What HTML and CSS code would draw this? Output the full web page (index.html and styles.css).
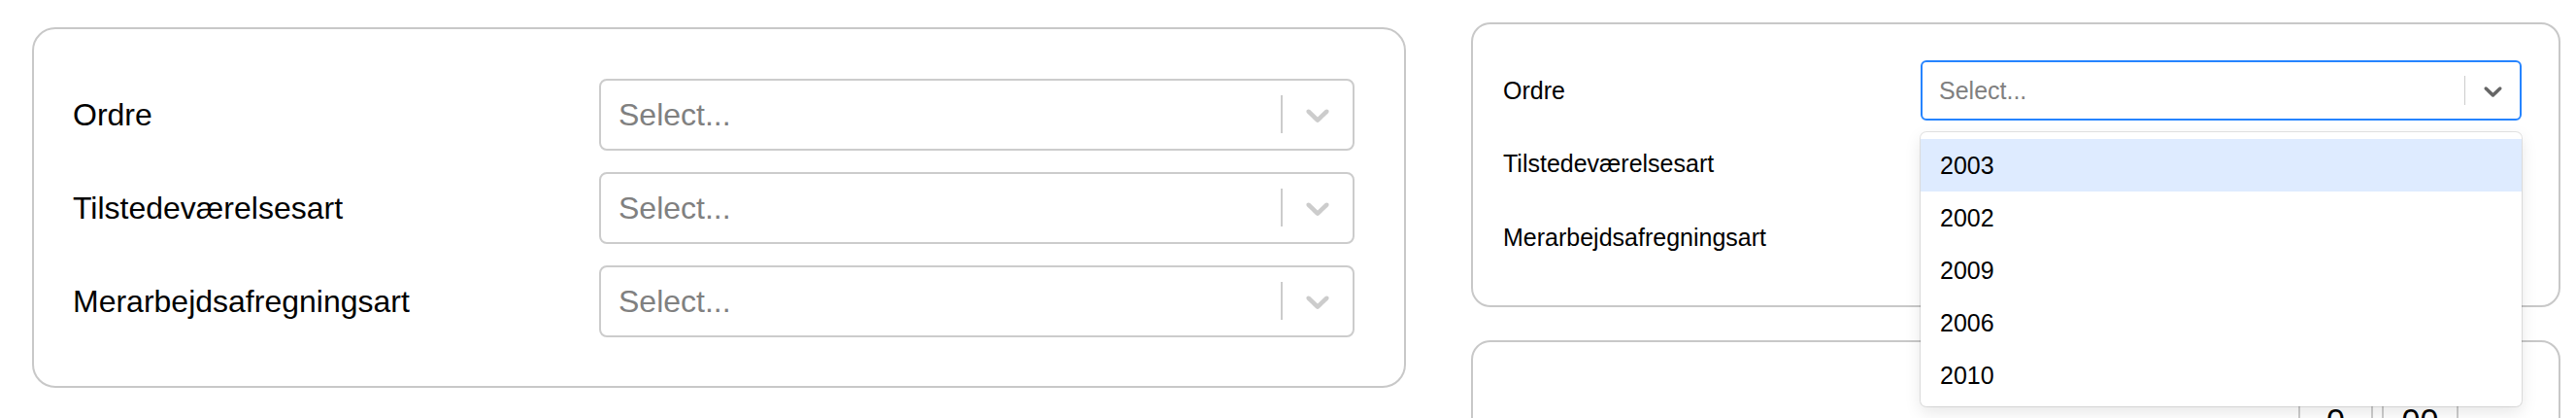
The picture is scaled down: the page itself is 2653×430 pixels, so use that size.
FILE: index.html
```html
<!DOCTYPE html>
<html lang="da">
<head>
    <meta charset="UTF-8">
    <title>Ordre</title>
    <link rel="stylesheet" href="styles.css">
</head>
<body>

    <div class="page">

        <!-- Large form card -->
        <section class="card card-big">
            <div class="fields">
                <label class="field-label">Ordre</label>
                <div class="select">
                    <div class="select-value">Select...</div>
                    <span class="select-sep"></span>
                    <div class="select-arrow">
                        <svg viewBox="0 0 20 20"><path d="M4.516 7.548c0.436-0.446 1.043-0.481 1.576 0l3.908 3.747 3.908-3.747c0.533-0.481 1.141-0.446 1.574 0 0.436 0.445 0.408 1.197 0 1.615-0.406 0.418-4.695 4.502-4.695 4.502-0.217 0.223-0.502 0.335-0.787 0.335s-0.57-0.112-0.789-0.335c0 0-4.287-4.084-4.695-4.502s-0.436-1.17 0-1.615z"/></svg>
                    </div>
                </div>

                <label class="field-label">Tilstedeværelsesart</label>
                <div class="select">
                    <div class="select-value">Select...</div>
                    <span class="select-sep"></span>
                    <div class="select-arrow">
                        <svg viewBox="0 0 20 20"><path d="M4.516 7.548c0.436-0.446 1.043-0.481 1.576 0l3.908 3.747 3.908-3.747c0.533-0.481 1.141-0.446 1.574 0 0.436 0.445 0.408 1.197 0 1.615-0.406 0.418-4.695 4.502-4.695 4.502-0.217 0.223-0.502 0.335-0.787 0.335s-0.57-0.112-0.789-0.335c0 0-4.287-4.084-4.695-4.502s-0.436-1.17 0-1.615z"/></svg>
                    </div>
                </div>

                <label class="field-label">Merarbejdsafregningsart</label>
                <div class="select">
                    <div class="select-value">Select...</div>
                    <span class="select-sep"></span>
                    <div class="select-arrow">
                        <svg viewBox="0 0 20 20"><path d="M4.516 7.548c0.436-0.446 1.043-0.481 1.576 0l3.908 3.747 3.908-3.747c0.533-0.481 1.141-0.446 1.574 0 0.436 0.445 0.408 1.197 0 1.615-0.406 0.418-4.695 4.502-4.695 4.502-0.217 0.223-0.502 0.335-0.787 0.335s-0.57-0.112-0.789-0.335c0 0-4.287-4.084-4.695-4.502s-0.436-1.17 0-1.615z"/></svg>
                    </div>
                </div>
            </div>
        </section>

        <!-- Side column -->
        <div class="side">
            <section class="card card-small">
                <div class="fields">
                    <label class="field-label">Ordre</label>
                    <div class="select is-open">
                        <div class="select-value">Select...</div>
                        <span class="select-sep"></span>
                        <div class="select-arrow">
                            <svg viewBox="0 0 20 20"><path d="M4.516 7.548c0.436-0.446 1.043-0.481 1.576 0l3.908 3.747 3.908-3.747c0.533-0.481 1.141-0.446 1.574 0 0.436 0.445 0.408 1.197 0 1.615-0.406 0.418-4.695 4.502-4.695 4.502-0.217 0.223-0.502 0.335-0.787 0.335s-0.57-0.112-0.789-0.335c0 0-4.287-4.084-4.695-4.502s-0.436-1.17 0-1.615z"/></svg>
                        </div>

                        <!-- Open dropdown -->
                        <ul class="menu">
                            <li class="menu-option is-focused">2003</li>
                            <li class="menu-option">2002</li>
                            <li class="menu-option">2009</li>
                            <li class="menu-option">2006</li>
                            <li class="menu-option">2010</li>
                        </ul>
                    </div>

                    <label class="field-label">Tilstedeværelsesart</label>
                    <div class="select">
                        <div class="select-value">Select...</div>
                        <span class="select-sep"></span>
                        <div class="select-arrow">
                            <svg viewBox="0 0 20 20"><path d="M4.516 7.548c0.436-0.446 1.043-0.481 1.576 0l3.908 3.747 3.908-3.747c0.533-0.481 1.141-0.446 1.574 0 0.436 0.445 0.408 1.197 0 1.615-0.406 0.418-4.695 4.502-4.695 4.502-0.217 0.223-0.502 0.335-0.787 0.335s-0.57-0.112-0.789-0.335c0 0-4.287-4.084-4.695-4.502s-0.436-1.17 0-1.615z"/></svg>
                        </div>
                    </div>

                    <label class="field-label">Merarbejdsafregningsart</label>
                    <div class="select">
                        <div class="select-value">Select...</div>
                        <span class="select-sep"></span>
                        <div class="select-arrow">
                            <svg viewBox="0 0 20 20"><path d="M4.516 7.548c0.436-0.446 1.043-0.481 1.576 0l3.908 3.747 3.908-3.747c0.533-0.481 1.141-0.446 1.574 0 0.436 0.445 0.408 1.197 0 1.615-0.406 0.418-4.695 4.502-4.695 4.502-0.217 0.223-0.502 0.335-0.787 0.335s-0.57-0.112-0.789-0.335c0 0-4.287-4.084-4.695-4.502s-0.436-1.17 0-1.615z"/></svg>
                        </div>
                    </div>
                </div>
            </section>

            <section class="card card-time">
                <div class="time">
                    <div class="time-box time-hours">0</div>
                    <div class="time-box time-minutes">00</div>
                </div>
            </section>
        </div>

    </div>

</body>
</html>
```

FILE: styles.css
```css
/* Reset */
* {
    margin: 0;
    padding: 0;
    box-sizing: border-box;
}

html, body {
    height: 430px;
    overflow: hidden;
}

body {
    font-family: "Liberation Sans", Arial, Helvetica, sans-serif;
    background-color: #ffffff;
    color: #000000;
}

.page {
    display: flex;
    align-items: flex-start;
    padding-left: 33px;
}

/* Cards */
.card {
    background-color: #ffffff;
    border: 2px solid #c8c8c8;
}

.card-big {
    width: 1415px;
    margin-top: 28px;
    padding: 51px 51px 50px 40px;
    border-radius: 24px;
}

.side {
    width: 1122px;
    margin-top: 23px;
    margin-left: 67px;
    display: flex;
    flex-direction: column;
    gap: 34px;
}

.card-small {
    padding: 37px 38px 39px 31px;
    border-radius: 20px;
}

.card-time {
    height: 120px;
    padding: 43px 103px 0 0;
    border-radius: 20px;
}

/* Label + select grid */
.fields {
    display: grid;
    align-items: center;
}

.card-big .fields {
    grid-template-columns: 542px 778px;
    row-gap: 22px;
    font-size: 32px;
}

.card-small .fields {
    grid-template-columns: 430px 619px;
    row-gap: 13.5px;
    font-size: 25px;
}

.field-label {
    color: #000000;
}

/* Select (react-select look) */
.select {
    position: relative;
    display: flex;
    align-items: center;
    border: 2px solid #cccccc;
    background-color: #ffffff;
}

.select-value {
    flex: 1;
    color: #808080;
}

.select-sep {
    align-self: stretch;
    background-color: #cccccc;
}

.select-arrow {
    display: flex;
    align-items: center;
}

.select-arrow svg {
    display: block;
    fill: #cccccc;
}

.card-big .select {
    height: 74px;
    border-radius: 8px;
}

.card-big .select-value {
    padding-left: 18px;
}

.card-big .select-sep {
    width: 2px;
    margin: 15px 0 16px;
}

.card-big .select-arrow {
    padding: 0 16px;
}

.card-big .select-arrow svg {
    width: 40px;
    height: 40px;
}

.card-small .select {
    height: 62px;
    border-radius: 6px;
}

.card-small .select-value {
    padding-left: 17px;
}

.card-small .select-sep {
    width: 1.5px;
    margin: 14px 0;
}

.card-small .select-arrow {
    padding: 0 12px 0 13px;
}

.card-small .select-arrow svg {
    width: 31px;
    height: 31px;
}

/* Focused / open state */
.select.is-open {
    border-color: #2684ff;
}

.select.is-open .select-arrow svg {
    fill: #666666;
}

/* Dropdown menu */
.menu {
    position: absolute;
    top: 72px;
    left: -2px;
    right: -2px;
    z-index: 10;
    list-style: none;
    padding: 7px 0 5px;
    background-color: #ffffff;
    border-radius: 6px;
    box-shadow: 0 0 0 1px rgba(0, 0, 0, 0.1), 0 6px 17px rgba(0, 0, 0, 0.1);
}

.menu-option {
    height: 54px;
    line-height: 54px;
    padding-left: 20px;
    color: #000000;
}

.menu-option.is-focused {
    background-color: #deebff;
}

/* Time inputs */
.time {
    display: flex;
    justify-content: flex-end;
    gap: 9px;
}

.time-box {
    height: 74px;
    line-height: 70px;
    border: 2px solid #cccccc;
    font-size: 34px;
    text-align: center;
}

.time-hours {
    width: 77px;
}

.time-minutes {
    width: 79px;
}
```
